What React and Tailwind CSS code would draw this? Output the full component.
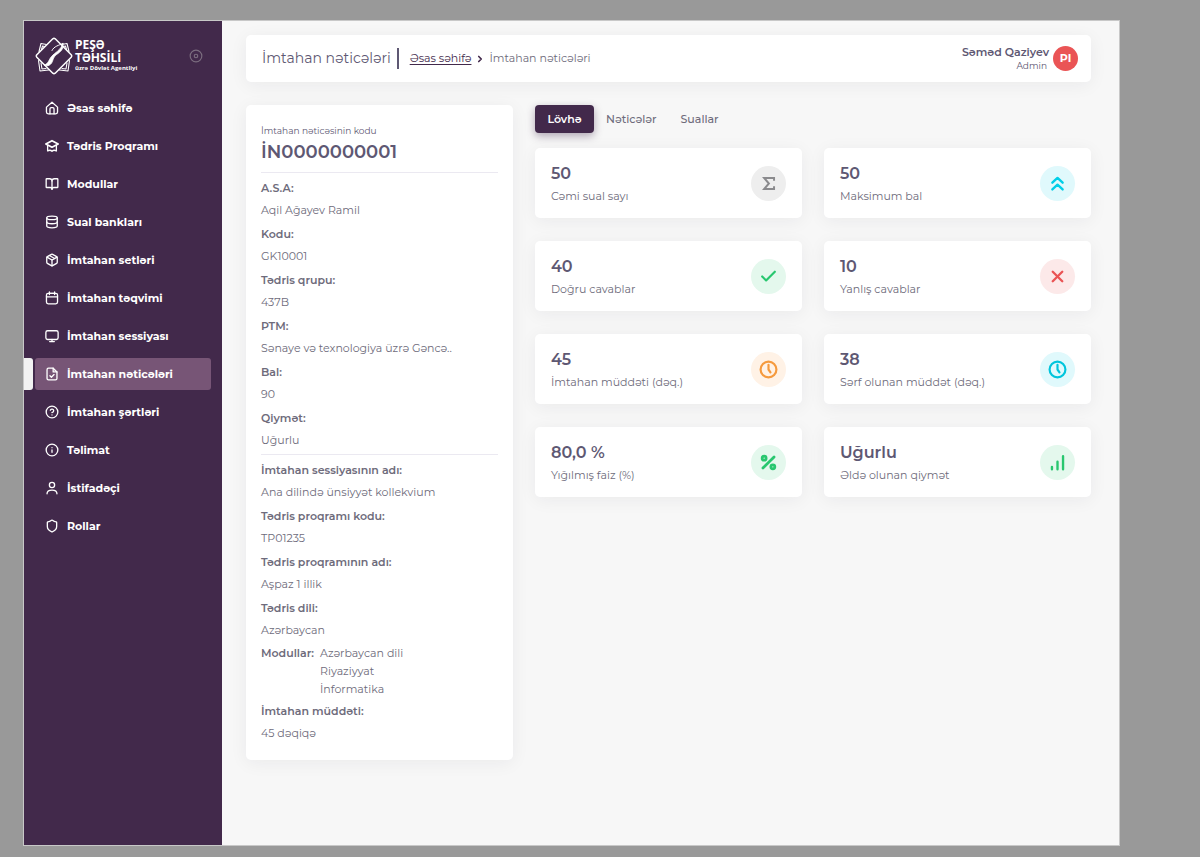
import { BookOpen, Check, ChevronRight, CircleQuestionMark, Database, Info, Package, Percent, Shield, X } from "lucide-react";

function Icon({ children, className, strokeWidth = 2 }) {
  return (
    <svg viewBox="0 0 24 24" fill="none" stroke="currentColor" strokeWidth={strokeWidth} strokeLinecap="round" strokeLinejoin="round" className={className} aria-hidden="true">
      {children}
    </svg>
  );
}

const HomeIcon = (p) => (
  <Icon {...p}>
    <path d="M2.500 10.500 12 2l9.500 8.500V19a3 3 0 0 1-3 3h-13a3 3 0 0 1-3-3z" />
    <path d="M8.500 22v-8.500a2 2 0 0 1 2-2h3a2 2 0 0 1 2 2V22" />
  </Icon>
);
const SchoolIcon = (p) => (
  <Icon {...p}>
    <path d="M12 3 1.500 8.500 12 14l10.500-5.500z" strokeWidth={3} />
    <path d="M4.500 11v9.500c2.500-1.500 5.500-1.500 7.500.5 2-2 5-2 7.500-.5V11" />
  </Icon>
);
const CalendarIcon = (p) => (
  <Icon {...p}>
    <rect x="2.500" y="4" width="19" height="18" rx="3" />
    <path d="M2.500 10h19M7.500 1.500V6M16.500 1.500V6M8 4h8" />
  </Icon>
);
const MonitorIcon = (p) => (
  <Icon {...p}>
    <rect x="1.500" y="3" width="21" height="15" rx="3" />
    <path d="M8 21.500h8M12 18v3.500" />
  </Icon>
);
const ResultIcon = (p) => (
  <Icon {...p}>
    <path d="M14 2H6a2.500 2.500 0 0 0-2.500 2.500v15A2.500 2.500 0 0 0 6 22h12a2.500 2.500 0 0 0 2.500-2.500V8.500z" />
    <path d="M14 2v6.500h6.500M8.500 15l2.500 2.500 4.500-4.500" />
  </Icon>
);
const UserIcon = (p) => (
  <Icon {...p}>
    <circle cx="12" cy="7" r="4.500" />
    <path d="M3.500 22c0-4 3.500-6.500 8.500-6.500s8.500 2.500 8.500 6.500" />
  </Icon>
);
const SigmaIcon = (p) => (
  <Icon {...p}>
    <path strokeLinejoin="miter" strokeLinecap="butt" d="M19 8.500V5H6.500L12.500 12l-6 7H19v-3.500" />
  </Icon>
);
const DoubleUpIcon = (p) => (
  <Icon {...p}>
    <path d="m5.500 11 6.500-6 6.500 6M5.500 19.500l6.500-6 6.500 6" />
  </Icon>
);
const ClockIcon = (p) => (
  <Icon {...p}>
    <circle cx="12" cy="12" r="10" />
    <path d="M12 6v6l2.500 3.500" />
  </Icon>
);
const BarsIcon = (p) => (
  <Icon {...p}>
    <path d="M5 17.500v3M12 11v9.500M19 4v16.500" />
  </Icon>
);
const PinIcon = (p) => (
  <Icon {...p}>
    <circle cx="12" cy="12" r="10" />
    <circle cx="12" cy="12" r="3" />
  </Icon>
);

const NAV = [
  ["Əsas səhifə", HomeIcon],
  ["Tədris Proqramı", SchoolIcon],
  ["Modullar", BookOpen],
  ["Sual bankları", Database],
  ["İmtahan setləri", Package],
  ["İmtahan təqvimi", CalendarIcon],
  ["İmtahan sessiyası", MonitorIcon],
  ["İmtahan nəticələri", ResultIcon],
  ["İmtahan şərtləri", CircleQuestionMark],
  ["Təlimat", Info],
  ["İstifadəçi", UserIcon],
  ["Rollar", Shield],
];

const PERSON = [
  ["A.S.A:", "Aqil Ağayev Ramil"],
  ["Kodu:", "GK10001"],
  ["Tədris qrupu:", "437B"],
  ["PTM:", "Sənaye və texnologiya üzrə Gəncə.."],
  ["Bal:", "90"],
  ["Qiymət:", "Uğurlu"],
];

const SESSION = [
  ["İmtahan sessiyasının adı:", "Ana dilində ünsiyyət kollekvium"],
  ["Tədris proqramı kodu:", "TP01235"],
  ["Tədris proqramının adı:", "Aşpaz 1 illik"],
  ["Tədris dili:", "Azərbaycan"],
];

const STATS = [
  ["50", "Cəmi sual sayı", SigmaIcon, "bg-[#eeeeee] text-[#8a8a8d]", 2.5],
  ["50", "Maksimum bal", DoubleUpIcon, "bg-[#e0f9fc] text-[#00cfe8]", 3],
  ["40", "Doğru cavablar", Check, "bg-[#e4f8ed] text-[#28c76f]", 2.75],
  ["10", "Yanlış cavablar", X, "bg-[#fce9e9] text-[#ea5455]", 3],
  ["45", "İmtahan müddəti (dəq.)", ClockIcon, "bg-[#fff2e6] text-[#f59a3e]", 2.75],
  ["38", "Sərf olunan müddət (dəq.)", ClockIcon, "bg-[#e0f9fc] text-[#00c5dc]", 2.75],
  ["80,0 %", "Yığılmış faiz (%)", Percent, "bg-[#e4f8ed] text-[#28c76f]", 3.5],
  ["Uğurlu", "Əldə olunan qiymət", BarsIcon, "bg-[#e4f8ed] text-[#28c76f]", 3],
];

function Logo() {
  return (
    <a href="#" className="flex items-center gap-[2px] text-white">
      <svg viewBox="0 0 38 38" className="size-[38px] shrink-0" fill="none" stroke="currentColor" strokeLinejoin="round" strokeLinecap="round" aria-hidden="true">
        <path d="M17.800 1.800 1.800 17.800q-1 1.200 0 2.400l16 16q1.200 1 2.400 0l16-16q1-1.200 0-2.400l-16-16q-1.200-1-2.400 0z" strokeWidth="1.500" />
        <path d="M11.500 7.500 6 6.500 4 14.500M9.500 9.500 7.500 9 6.500 12.500M26.500 7.500l5.500-1 2 8M28.500 9.500l2-.5 1 3.500M3.500 23.500l1.500 10.500 8.500-1M6 26l1 6 4-.500M34.500 23.500 33 34l-8.500-1M32 26l-1 6-4-.500" strokeWidth="1.100" />
        <path d="M27.500 6.500c-3.500 2-8.500 2.500-10.500 7" strokeWidth="1" />
        <path d="M28 6.500c1 7.500-4.500 9-7.500 12-3.500 3.500-2 7-6 9.500-2 1.200-4 1-5.500 0 4.500-1 4.500-5 7.500-8.500C20 15.500 25.500 13.500 28 6.500z" fill="currentColor" strokeWidth="0.800" />
      </svg>
      <span className="flex flex-col pb-[2px] font-['Open_Sans',sans-serif] font-bold">
        <span className="text-[12px] leading-[13px]">PEŞƏ</span>
        <span className="text-[12px] leading-[13px]">TƏHSİLİ</span>
        <span className="text-[6px] leading-[9px] whitespace-nowrap">üzrə Dövlət Agentliyi</span>
      </span>
    </a>
  );
}

function Sidebar() {
  return (
    <aside className="w-[198px] shrink-0 bg-[#42294b] text-white">
      <div className="flex h-[70px] items-center justify-between pr-[19px] pl-[11px]">
        <Logo />
        <button type="button" aria-label="Menyunu sabitlə" className="text-[#7b6d7f]">
          <PinIcon className="size-[14px]" strokeWidth={2} />
        </button>
      </div>
      <nav className="pt-[1px]">
        <ul className="flex flex-col gap-[6px]">
          {NAV.map(([label, NavIcon]) => {
            const active = label === "İmtahan nəticələri";
            return (
              <li key={label} className="flex gap-[2px] pr-[11px]">
                <span className={active ? "w-[9px] rounded-r-[3px] bg-[#f2f2f2]" : "w-[9px]"} />
                <a
                  href="#"
                  aria-current={active ? "page" : undefined}
                  className={`flex h-8 flex-1 items-center gap-2 rounded-[3px] px-[10px] text-[11px] font-bold ${active ? "bg-[#775576]" : ""}`}
                >
                  <NavIcon className="size-[14px] shrink-0" strokeWidth={2.25} />
                  {label}
                </a>
              </li>
            );
          })}
        </ul>
      </nav>
    </aside>
  );
}

const CARD = "rounded-[5px] bg-white shadow-[0_3px_18px_rgba(34,41,47,0.06)]";

function Header() {
  return (
    <header className={`flex h-[47px] items-center justify-between pr-[13px] pl-4 ${CARD}`}>
      <div className="flex items-center">
        <h1 className="border-r-2 border-[#5e5873] pr-[6px] text-[14px] leading-[21px]">İmtahan nəticələri</h1>
        <nav aria-label="Səhifə yolu" className="ml-[11px] flex items-center gap-1 text-[11px]">
          <a href="#" className="text-[#42294b] underline underline-offset-2">Əsas səhifə</a>
          <ChevronRight className="size-[10px] text-[#42294b]" strokeWidth={4} />
          <span className="text-[#6e6b7b]">İmtahan nəticələri</span>
        </nav>
      </div>
      <div className="flex items-center gap-1">
        <div className="text-right">
          <p className="text-[11px] leading-[13px] font-semibold">Səməd Qaziyev</p>
          <p className="pr-[2px] text-[9px] leading-[13px]">Admin</p>
        </div>
        <span className="flex size-[25px] items-center justify-center rounded-full bg-[#ea5455] text-[11px] font-bold text-white">PI</span>
      </div>
    </header>
  );
}

function Field({ label, value }) {
  return (
    <div>
      <dt className="font-semibold">{label}</dt>
      <dd>{value}</dd>
    </div>
  );
}

function Details() {
  return (
    <section className={`px-[15px] pt-[18px] pb-4 text-[11px] leading-[22px] text-[#6e6b7b] ${CARD}`}>
      <p className="text-[9px] leading-[15px] text-[#5e5873]">İmtahan nəticəsinin kodu</p>
      <h2 className="text-[18px] leading-[28px] font-semibold text-[#5e5873]">İN0000000001</h2>
      <dl className="mt-[6px] flex flex-col gap-[2px] border-t border-[#ebe9f1] pt-1">
        {PERSON.map(([label, value]) => <Field key={label} label={label} value={value} />)}
      </dl>
      <dl className="mt-[3px] flex flex-col gap-[2px] border-t border-[#ebe9f1] pt-1">
        {SESSION.map(([label, value]) => <Field key={label} label={label} value={value} />)}
        <div className="flex gap-[6px] pt-[1px] leading-[18px]">
          <dt className="font-semibold">Modullar:</dt>
          <dd>
            <ul>
              <li>Azərbaycan dili</li>
              <li>Riyaziyyat</li>
              <li>İnformatika</li>
            </ul>
          </dd>
        </div>
        <Field label="İmtahan müddəti:" value="45 dəqiqə" />
      </dl>
    </section>
  );
}

function Stat({ value, label, icon: StatIcon, tone, weight }) {
  return (
    <li className={`flex h-[70px] items-center justify-between px-4 ${CARD}`}>
      <div className="pt-[2px]">
        <p className="text-[16px] leading-[24px] font-semibold">{value}</p>
        <p className="text-[11px] leading-[20px] text-[#6e6b7b]">{label}</p>
      </div>
      <span className={`flex size-[35px] items-center justify-center rounded-full ${tone}`}>
        <StatIcon className="size-[19px]" strokeWidth={weight} />
      </span>
    </li>
  );
}

export default function App() {
  return (
    <div className="flex min-h-screen bg-[#999999] pt-5 pr-20 pb-[11px] pl-[23px] font-[Montserrat,Inter,sans-serif] text-[#5e5873]">
      <div className="flex flex-1 border border-[#c8c8c8] bg-[#f7f7f7]">
        <Sidebar />
        <main className="min-w-0 flex-1 pt-[14px] pr-7 pb-6 pl-6">
          <Header />
          <div className="mt-[23px] grid grid-cols-3 items-start gap-[22px]">
            <Details />
            <div className="col-span-2">
              <div role="tablist" className="flex text-[11px] font-medium text-[#6e6b7b]">
                <button type="button" role="tab" aria-selected="true" className="h-7 w-[59px] rounded-[4px] bg-[#42294b] font-semibold text-white shadow-[0_3px_8px_rgba(66,41,75,0.4)]">Lövhə</button>
                <button type="button" role="tab" aria-selected="false" className="h-7 px-3">Nəticələr</button>
                <button type="button" role="tab" aria-selected="false" className="h-7 px-3">Suallar</button>
              </div>
              <ul className="mt-[15px] grid grid-cols-2 gap-x-[22px] gap-y-[23px]">
                {STATS.map(([value, label, icon, tone, weight]) => (
                  <Stat key={label} value={value} label={label} icon={icon} tone={tone} weight={weight} />
                ))}
              </ul>
            </div>
          </div>
        </main>
      </div>
    </div>
  );
}
